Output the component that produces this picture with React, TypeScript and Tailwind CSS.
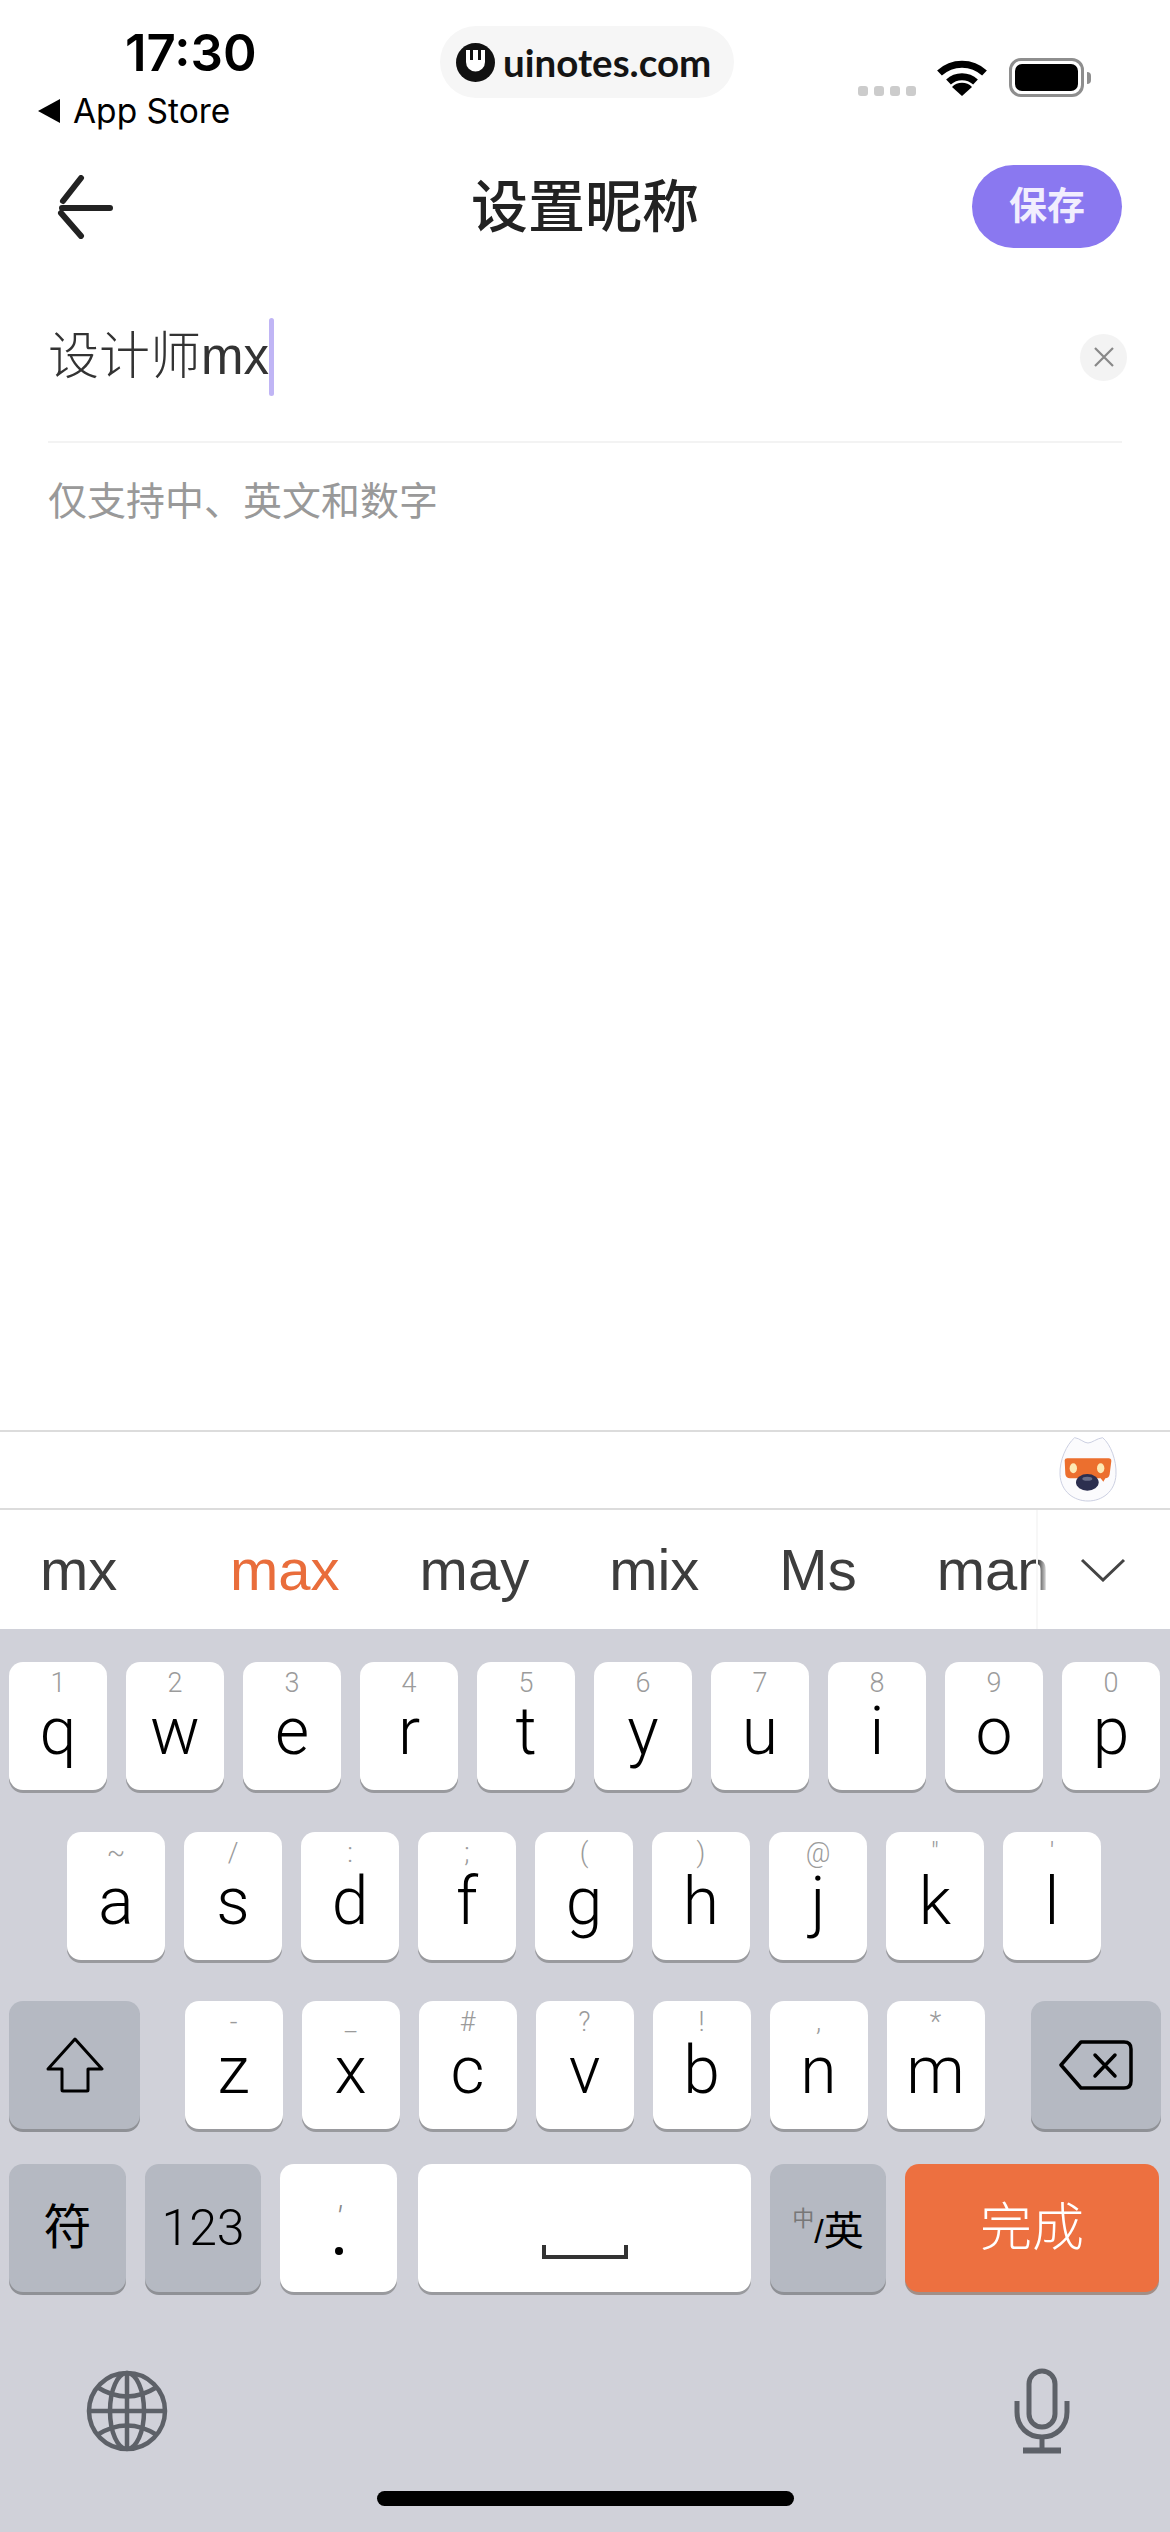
const rowOne = [
  ["q", "1"], ["w", "2"], ["e", "3"], ["r", "4"], ["t", "5"],
  ["y", "6"], ["u", "7"], ["i", "8"], ["o", "9"], ["p", "0"],
];
const rowTwo = [
  ["a", "~"], ["s", "/"], ["d", ":"], ["f", ";"], ["g", "("],
  ["h", ")"], ["j", "@"], ["k", '"'], ["l", "'"],
];
const rowThree = [
  ["z", "-"], ["x", "_"], ["c", "#"], ["v", "?"], ["b", "!"], ["n", ","], ["m", "*"],
];
const candidates = ["max", "may", "mix", "Ms", "man"];

function LetterKey({ letter, hint }: { letter: string; hint: string }) {
  return (
    <div className="w-[98px] h-[128px] shrink-0 rounded-[14px] bg-white shadow-[0_3px_0_#999a9e] flex flex-col items-center pt-[7px]">
      <span className="h-[28px] text-[27px] leading-[28px] font-light text-[#9b9b9b] font-['Roboto',sans-serif]">{hint}</span>
      <span className="text-[66px] leading-[70px] font-light text-black font-['Roboto',sans-serif]">{letter}</span>
    </div>
  );
}

function GrayKey({ className, children }: { className: string; children: React.ReactNode }) {
  return (
    <div className={`h-[128px] shrink-0 rounded-[14px] bg-[#b5b9c2] shadow-[0_3px_0_#8f9196] flex items-center justify-center ${className}`}>
      {children}
    </div>
  );
}

function Mascot() {
  return (
    <svg width="60" height="66" viewBox="0 0 180 198">
      <path d="M50 2 C66 4 78 18 90 18 C102 18 116 4 134 2 C158 22 176 70 174 112 C172 164 132 192 90 192 C48 192 8 164 6 112 C4 70 26 22 50 2Z" fill="#fbfbfd" stroke="#ccd0e2" strokeWidth="3" />
      <path d="M20 70 Q20 64 28 64 H152 Q160 64 160 72 L155 112 Q153 124 142 124 L136 134 L128 124 H36 Q24 124 22 112Z" fill="#ec6f2e" />
      <ellipse cx="46" cy="94" rx="11" ry="15" fill="#fde9b4" />
      <ellipse cx="128" cy="94" rx="11" ry="15" fill="#fde9b4" />
      <ellipse cx="88" cy="136" rx="34" ry="25" fill="#2c2f4f" />
      <ellipse cx="88" cy="125" rx="15" ry="6" fill="#6a6e88" />
    </svg>
  );
}

function ShiftIcon() {
  return (
    <svg width="60" height="56" viewBox="0 0 60 56" fill="none" stroke="#000" strokeWidth="3" strokeLinejoin="round">
      <path d="M30 2 L57 32 H43 V53 Q43 54 42 54 H18 Q17 54 17 53 V32 H3 Z" />
    </svg>
  );
}

function DeleteIcon() {
  return (
    <svg width="74" height="50" viewBox="0 0 74 50" fill="none" stroke="#000" strokeWidth="3.5" strokeLinejoin="round" strokeLinecap="round">
      <path d="M22 2 H65 Q72 2 72 9 V41 Q72 48 65 48 H22 L2 25 Z" />
      <path d="M36 15 L56 36 M56 15 L36 36" />
    </svg>
  );
}

function GlobeIcon() {
  return (
    <svg width="82" height="82" viewBox="0 0 82 82" fill="none" stroke="#5d6168" strokeWidth="4.5">
      <circle cx="41" cy="41" r="38" />
      <ellipse cx="41" cy="41" rx="17" ry="38" />
      <path d="M41 3 V79 M3 41 H79" />
      <path d="M11 17 Q41 36 71 17 M11 65 Q41 46 71 65" />
    </svg>
  );
}

function MicIcon() {
  return (
    <svg width="56" height="86" viewBox="0 0 56 86" fill="none" stroke="#5d6168" strokeWidth="5">
      <rect x="15" y="3" width="26" height="56" rx="13" />
      <path d="M3 33 V44 C3 59 14 69 28 69 C42 69 53 59 53 44 V33" />
      <path d="M28 69 V82" />
      <path d="M9 82.5 H47" strokeWidth="6" />
    </svg>
  );
}

export default function App() {
  return (
    <div className="w-[1170px] h-[2532px] flex flex-col bg-white overflow-hidden font-['Liberation_Sans','Noto_Sans_CJK_SC',sans-serif]">
      {/* status bar */}
      <div className="h-[165px] shrink-0 flex items-start">
        <div className="w-[440px] shrink-0 pl-[38px] pt-[24px] font-['Inter',sans-serif] text-black">
          <div className="pl-[87px] text-[51px] leading-[58px] font-semibold">17:30</div>
          <div className="mt-[7px] flex items-center gap-[13px]">
            <span className="w-0 h-0 border-y-[12px] border-y-transparent border-r-[22px] border-r-black" />
            <span className="text-[33.5px] leading-[44px] font-normal">App Store</span>
          </div>
        </div>
        <div className="mt-[26px] w-[294px] h-[72px] rounded-full bg-[#f6f6f6] flex items-center pl-[16px] gap-[8px]">
          <svg width="39" height="39" viewBox="0 0 39 39">
            <circle cx="19.5" cy="19.5" r="19.5" fill="#111" />
            <path d="M10 7 H29 V19 A9.5 9.5 0 0 1 10 19Z" fill="#fff" />
            <path d="M15.5 6 V17 M23.5 6 V17" stroke="#111" strokeWidth="3" />
          </svg>
          <span className="text-[38.5px] leading-[44px] font-bold text-[#141414] font-['Lato',sans-serif]">uinotes.com</span>
        </div>
        <div className="ml-[124px] mt-[58px] flex items-end">
          <div className="flex gap-[6px] mb-[1px]">
            <span className="w-[10px] h-[10px] rounded-[3px] bg-[#cccccc]" />
            <span className="w-[10px] h-[10px] rounded-[3px] bg-[#cccccc]" />
            <span className="w-[10px] h-[10px] rounded-[3px] bg-[#cccccc]" />
            <span className="w-[10px] h-[10px] rounded-[3px] bg-[#cccccc]" />
          </div>
          <svg className="ml-[21px] mb-[1px]" width="50" height="37" viewBox="0 0 50 37" fill="none" stroke="#000" strokeWidth="7">
            <path d="M2.5 14 A33 33 0 0 1 47.5 14" />
            <path d="M11.5 23 A20 20 0 0 1 38.5 23" />
            <path d="M25 37 L15 28 A14 14 0 0 1 35 28Z" fill="#000" stroke="none" />
          </svg>
          <div className="ml-[22px] w-[75px] h-[39px] rounded-[12px] border-[3px] border-[#8e8e8e] p-[3px]">
            <div className="w-full h-full rounded-[7px] bg-black" />
          </div>
          <span className="ml-[3px] mb-[13px] w-[4px] h-[12px] rounded-r-[4px] bg-[#8e8e8e]" />
        </div>
      </div>

      {/* nav */}
      <div className="grid grid-cols-[1fr_auto_1fr] items-center px-[48px] h-[83px] shrink-0">
        <svg className="ml-[8px]" width="60" height="64" viewBox="0 0 60 64" fill="none" stroke="#222" strokeWidth="6" strokeLinecap="round">
          <path d="M25 3 L7 26" />
          <path d="M6 33 H54" />
          <path d="M5 38 L25 61" />
        </svg>
        <div className="text-[57px] leading-[70px] font-medium text-[#222]">设置昵称</div>
        <div className="flex justify-end">
          <div className="w-[150px] h-[83px] rounded-full bg-[#8a78f0] flex items-center justify-center text-[38px] font-bold text-[#f1eefe]">保存</div>
        </div>
      </div>

      {/* input */}
      <div className="mt-[70px] h-[78px] shrink-0 flex items-center pl-[48px] pr-[43px]">
        <span className="text-[51px] leading-[60px] font-light text-[#333]">设计师mx</span>
        <span className="w-[5px] h-[78px] rounded-full bg-[#c0b5f5]" />
        <div className="ml-auto w-[47px] h-[47px] rounded-full bg-[#f3f3f3] flex items-center justify-center">
          <svg width="24" height="24" viewBox="0 0 24 24" fill="none" stroke="#888" strokeWidth="2.2">
            <path d="M3 3 L21 21 M21 3 L3 21" />
          </svg>
        </div>
      </div>
      <div className="mt-[45px] mx-[48px] h-[2px] shrink-0 bg-[#f3f3f3]" />
      <div className="mt-[39px] px-[48px] text-[39px] leading-[40px] text-[#999]">仅支持中、英文和数字</div>

      <div className="flex-1" />

      {/* keyboard toolbar */}
      <div className="h-[80px] shrink-0 border-y-2 border-[#dcdcdc] flex items-center justify-end pr-[52px]">
        <Mascot />
      </div>

      {/* candidates */}
      <div className="relative h-[119px] shrink-0 flex items-center text-[58px] leading-[70px] text-[#3d3d3d]">
        <div className="w-[1048px] overflow-hidden flex gap-[80px] pl-[40px]">
          <span className="min-w-[110px]">mx</span>
          {candidates.map((word, i) => (
            <span key={word} className={i === 0 ? "text-[#e96d3b]" : ""}>{word}</span>
          ))}
        </div>
        <div className="absolute left-[1036px] top-0 bottom-0 w-[12px] bg-gradient-to-r from-white/0 to-white border-l-2 border-[#f7f7f7]" />
        <svg className="ml-[32px]" width="46" height="24" viewBox="0 0 46 24" fill="none" stroke="#444" strokeWidth="3">
          <path d="M2 2 L23 22 L44 2" />
        </svg>
      </div>

      {/* keys */}
      <div className="flex-col flex shrink-0 h-[903px] bg-[#d0d1d9] pt-[33px] px-[9px]">
        <div className="flex gap-[19px]">
          {rowOne.map(([letter, hint]) => (
            <LetterKey key={letter} letter={letter} hint={hint} />
          ))}
        </div>
        <div className="mt-[42px] pl-[58px] flex gap-[19px]">
          {rowTwo.map(([letter, hint]) => (
            <LetterKey key={letter} letter={letter} hint={hint} />
          ))}
        </div>
        <div className="mt-[41px] flex justify-between">
          <GrayKey className="w-[131px]"><ShiftIcon /></GrayKey>
          <div className="flex gap-[19px] mr-[2px]">
            {rowThree.map(([letter, hint]) => (
              <LetterKey key={letter} letter={letter} hint={hint} />
            ))}
          </div>
          <GrayKey className="w-[130px]"><DeleteIcon /></GrayKey>
        </div>
        <div className="mt-[35px] flex gap-[19px]">
          <GrayKey className="w-[117px] text-[48px] text-black">符</GrayKey>
          <GrayKey className="w-[116px] text-[50px] font-light text-black font-['Roboto',sans-serif]">123</GrayKey>
          <div className="w-[117px] h-[128px] shrink-0 rounded-[14px] bg-white shadow-[0_3px_0_#999a9e] flex flex-col items-center pt-[40px]">
            <span className="h-[28px] text-[34px] leading-[28px] italic font-light text-[#888] font-['Roboto',sans-serif]">'</span>
            <span className="mt-[15px] w-[8px] h-[8px] rounded-full bg-black" />
          </div>
          <div className="ml-[2px] w-[333px] h-[128px] shrink-0 rounded-[14px] bg-white shadow-[0_3px_0_#999a9e] flex items-end justify-center pb-[33px]">
            <div className="w-[86px] h-[14px] border-x-[4px] border-b-[4px] border-[#333]" />
          </div>
          <GrayKey className="w-[116px] text-black">
            <span className="self-start mt-[42px] text-[22px] leading-[26px] text-[#777]">中</span>
            <span className="text-[34px] leading-[40px] font-light mt-[6px]">/</span>
            <span className="text-[40px] leading-[44px] mt-[6px]">英</span>
          </GrayKey>
          <div className="w-[254px] h-[128px] shrink-0 rounded-[14px] bg-[#ed7040] shadow-[0_3px_0_#a28f87] flex items-center justify-center text-[52px] font-light text-white">完成</div>
        </div>
        <div className="mt-[76px] flex justify-between items-center pl-[77px] pr-[91px]">
          <GlobeIcon />
          <MicIcon />
        </div>
        <div className="mt-[37px] self-center w-[417px] h-[15px] rounded-full bg-black" />
      </div>
    </div>
  );
}
